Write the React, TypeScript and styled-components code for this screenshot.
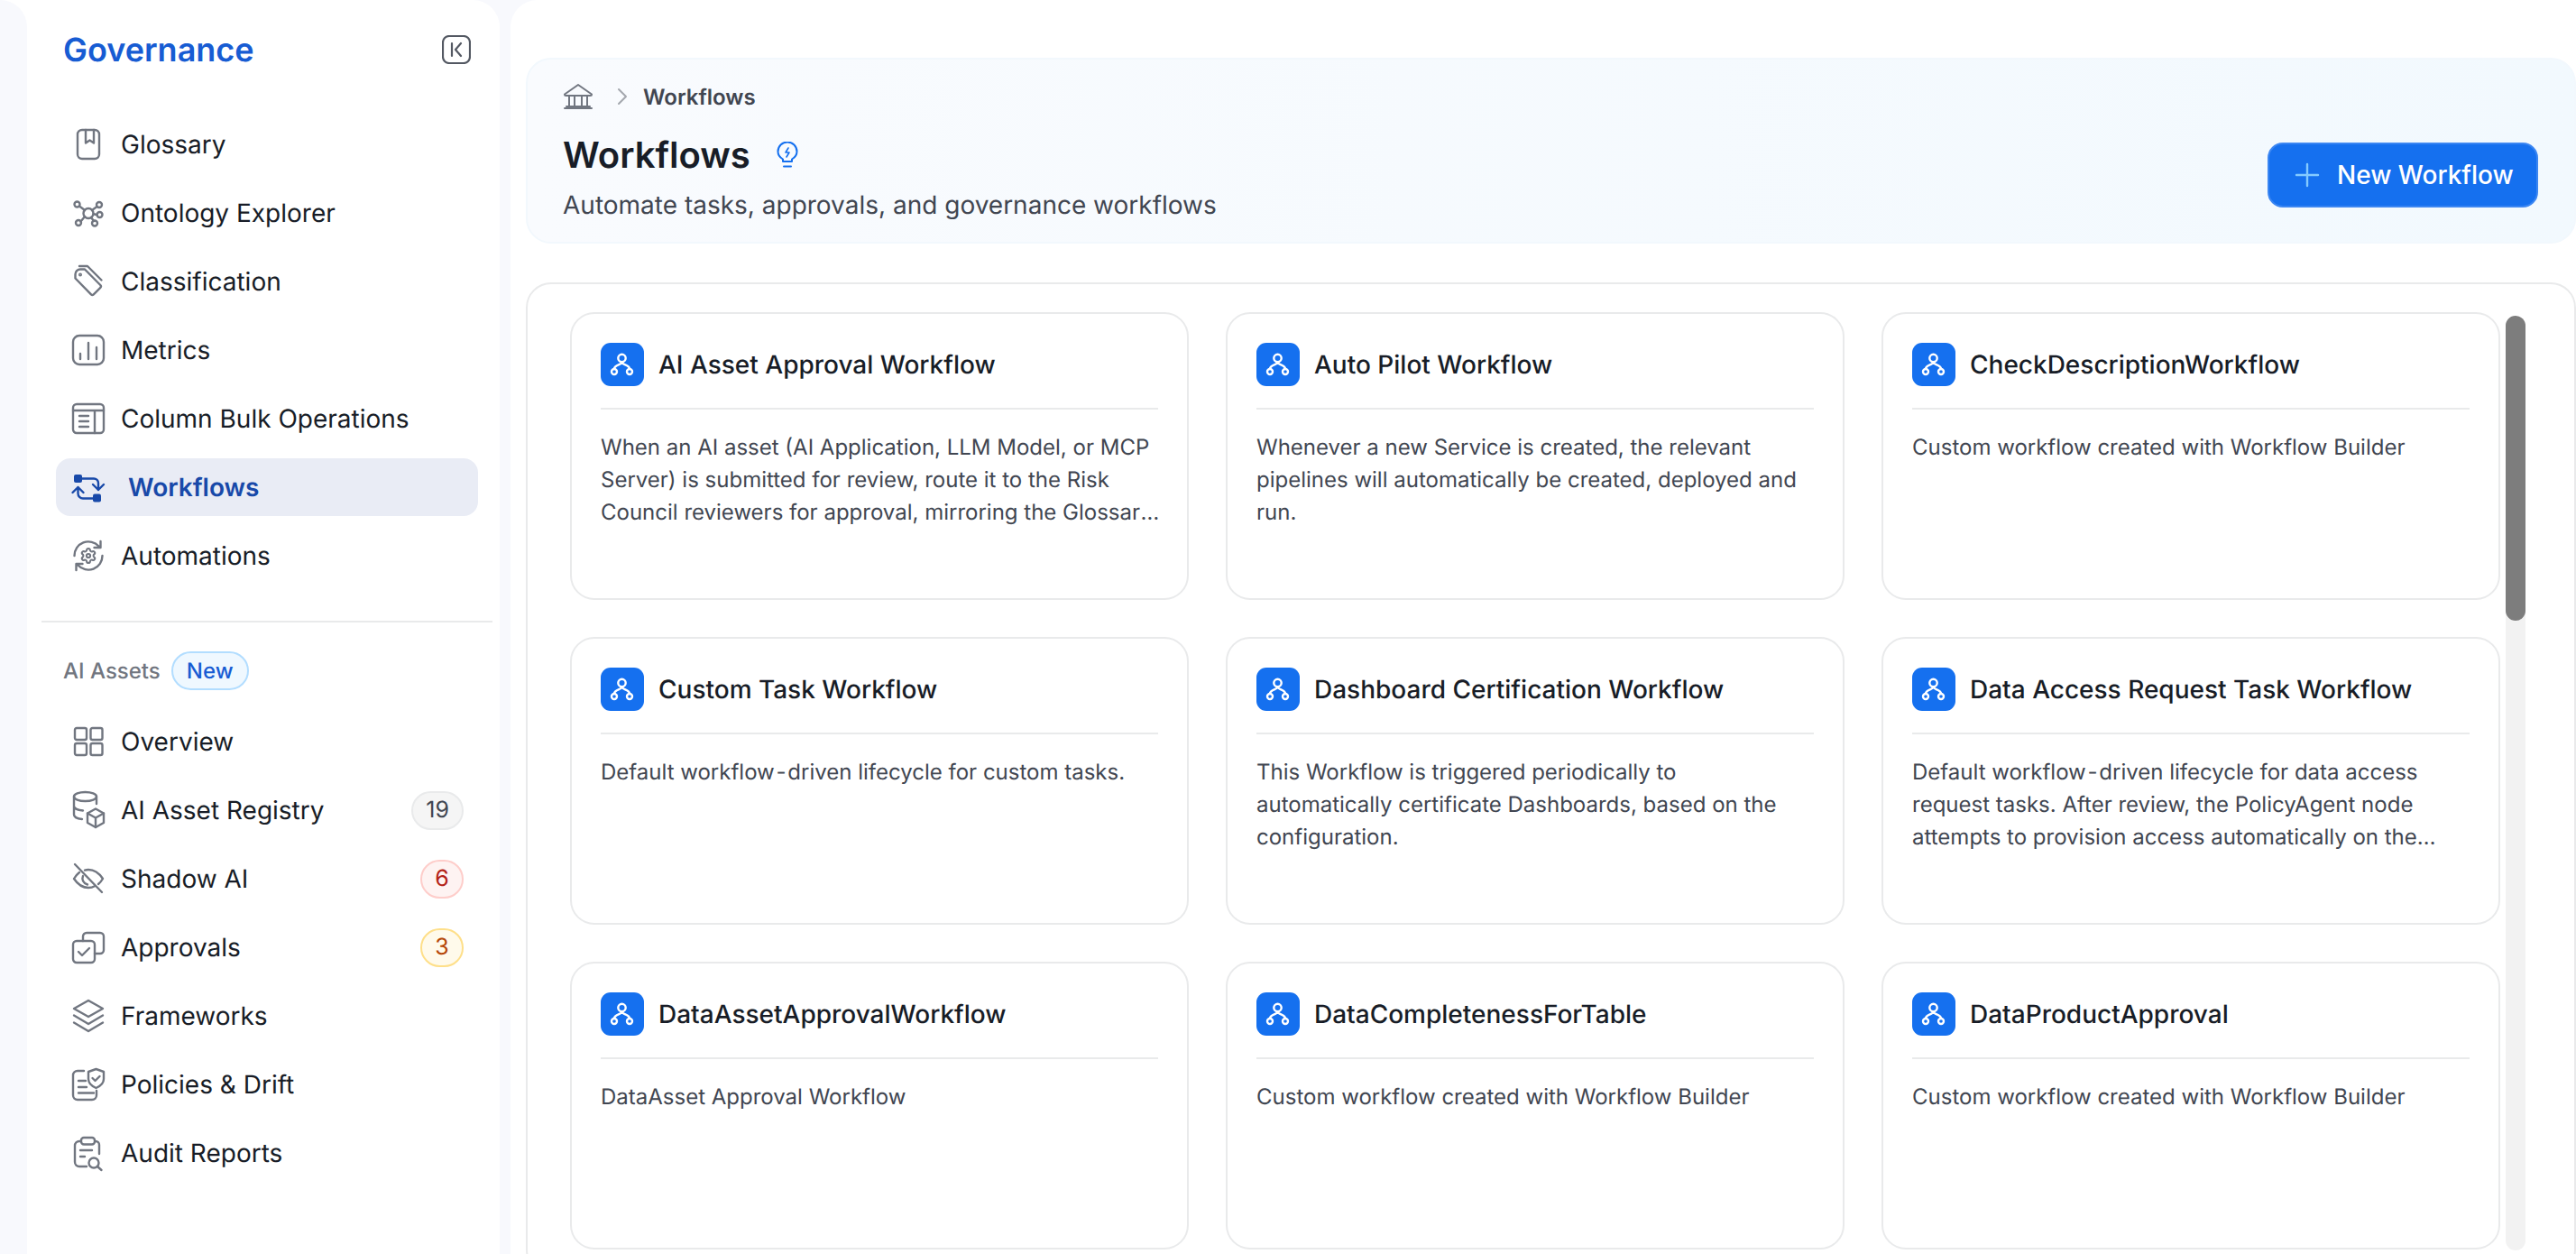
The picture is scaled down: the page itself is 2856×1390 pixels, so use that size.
import { ReactNode } from 'react'
import styled, { createGlobalStyle } from 'styled-components'

//#region STYLE
const GlobalStyle = createGlobalStyle`
	html, body, #root {
		margin: 0;
		height: 100%;
	}
	body {
		background-color: #fff;
		font-family: Inter, "Noto Sans", sans-serif;
		color: #181d27;
		-webkit-font-smoothing: antialiased;
		text-rendering: geometricPrecision;
	}
	* {
		box-sizing: border-box;
	}
`
const Shell = styled.div`
	display: flex;
	height: 100vh;
	overflow: hidden;
	background-color: #fff;
`
const LeftRail = styled.div`
	flex: none;
	width: 30px;
	background-color: #f8f9fd;
	border-top-right-radius: 30px;
`
const Workspace = styled.div`
	flex: 1;
	display: flex;
	gap: 12px;
	min-width: 0;
	background-color: #f8f9fd;
`
const Sidebar = styled.aside`
	flex: none;
	width: 524px;
	padding-top: 33px;
	background-color: #fff;
	border-top-right-radius: 30px;
`
const SidebarHeader = styled.div`
	display: flex;
	align-items: center;
	justify-content: space-between;
	height: 44px;
	padding: 0 32px 0 40px;
	margin-bottom: 51px;
`
const Brand = styled.div`
	font-size: 36px;
	font-weight: 600;
	color: #175cd3;
`
const CollapseButton = styled.div`
	display: flex;
	width: 32px;
	height: 32px;
`
const NavList = styled.nav`
	display: flex;
	flex-direction: column;
	gap: 12px;
	padding: 0 24px 0 32px;
`
const NavItem = styled.div<{ $active?: boolean }>`
	display: flex;
	align-items: center;
	gap: ${p => (p.$active ? 26 : 18)}px;
	height: 64px;
	padding: 0 16px 0 18px;
	border-radius: 16px;
	font-size: 28px;
	font-weight: ${p => (p.$active ? 600 : 400)};
	color: ${p => (p.$active ? '#1849a9' : '#181d27')};
	background-color: ${p => (p.$active ? '#e9ecf5' : 'transparent')};
`
const NavIconBox = styled.svg<{ $active?: boolean }>`
	flex: none;
	width: 36px;
	height: 36px;
	overflow: visible;
	fill: none;
	stroke: ${p => (p.$active ? '#1849a9' : '#717680')};
	stroke-width: 2.4;
	stroke-linecap: round;
	stroke-linejoin: round;
`
const NavLabel = styled.span`
	flex: 1;
	white-space: nowrap;
`
const Divider = styled.div`
	height: 2px;
	margin: 40px 8px 32px 16px;
	background-color: #e9eaeb;
`
const SectionLabel = styled.div`
	display: flex;
	align-items: center;
	gap: 12px;
	height: 43px;
	padding-left: 40px;
	margin-bottom: 25px;
	font-size: 24px;
	font-weight: 500;
	color: #717680;
`
const NewBadge = styled.span`
	display: flex;
	align-items: center;
	justify-content: center;
	width: 86px;
	height: 43px;
	border: 2px solid #b2ddff;
	border-radius: 22px;
	background-color: #eff8ff;
	color: #175cd3;
	font-weight: 500;
`
const tones = {
	gray: { bg: '#f5f5f5', border: '#e9eaeb', color: '#414651' },
	red: { bg: '#fef3f2', border: '#fecdca', color: '#b42318' },
	amber: { bg: '#fffaeb', border: '#fedf89', color: '#b54708' },
}
const CountBadge = styled.span<{ $tone: keyof typeof tones }>`
	display: flex;
	align-items: center;
	justify-content: center;
	min-width: 48px;
	height: 43px;
	padding: 0 14px;
	border: 2px solid ${p => tones[p.$tone].border};
	border-radius: 22px;
	background-color: ${p => tones[p.$tone].bg};
	color: ${p => tones[p.$tone].color};
	font-size: 25px;
`
const Main = styled.main`
	flex: 1;
	min-width: 0;
	padding: 64px 0 0 17px;
	background-color: #fff;
	border-top-left-radius: 30px;
`
const PageHeader = styled.header`
	display: flex;
	align-items: flex-end;
	justify-content: space-between;
	height: 206px;
	padding: 26px 40px 38px 39px;
	border: 2px solid #f2f8fd;
	border-radius: 28px;
	background: linear-gradient(90deg, #f9fbfe 0%, #f2f9fe 100%);
`
const HeaderText = styled.div`
	align-self: flex-start;
`
const Breadcrumb = styled.div`
	display: flex;
	align-items: center;
	height: 30px;
	font-size: 24px;
	font-weight: 600;
	color: #414651;
`
const Crumb = styled.span`
	margin-left: 17px;
`
const BreadcrumbChevron = styled.svg`
	margin-left: 26px;
	fill: none;
	stroke: #a4a7ae;
	stroke-width: 2;
	stroke-linecap: round;
	stroke-linejoin: round;
`
const PageTitleRow = styled.div`
	display: flex;
	align-items: center;
	gap: 29px;
	height: 52px;
	margin-top: 23px;
`
const PageTitle = styled.h1`
	margin: 0;
	font-size: 40px;
	font-weight: 600;
	color: #181d27;
`
const BulbBox = styled.svg`
	margin-top: 2px;
	fill: none;
	stroke: #1570ef;
	stroke-width: 2;
	stroke-linecap: round;
	stroke-linejoin: round;
`
const Subtitle = styled.p`
	margin: 12px 0 0;
	font-size: 28px;
	line-height: 36px;
	color: #414651;
`
const PrimaryButton = styled.button`
	display: flex;
	align-items: center;
	gap: 19px;
	width: 300px;
	height: 72px;
	padding: 0 0 0 28px;
	border: 2px solid #3b86f2;
	border-radius: 17px;
	background-color: #1570ef;
	color: #fff;
	font-family: inherit;
	font-size: 28px;
	font-weight: 500;
`
const ListPanel = styled.section`
	display: flex;
	gap: 6px;
	height: 1100px;
	margin-top: 43px;
	padding: 31px 0 0 47px;
	border: 2px solid #e9eaeb;
	border-radius: 28px;
`
const CardGrid = styled.div`
	display: grid;
	grid-template-columns: repeat(3, 686px);
	grid-auto-rows: 318.5px;
	gap: 41.5px 41px;
`
const Card = styled.article`
	display: flex;
	flex-direction: column;
	padding: 32px 32px 0;
	border: 2px solid #e9eaeb;
	border-radius: 27px;
	background-color: #fff;
`
const CardHead = styled.div`
	display: flex;
	align-items: center;
	gap: 16px;
	padding-bottom: 24px;
	border-bottom: 2px solid #e9eaeb;
`
const CardIcon = styled.div`
	flex: none;
	display: flex;
	align-items: center;
	justify-content: center;
	width: 48px;
	height: 48px;
	border-radius: 11px;
	background-color: #1570ef;
`
const CardTitle = styled.h3`
	margin: 0;
	font-size: 28px;
	font-weight: 500;
	color: #181d27;
	white-space: nowrap;
`
const CardText = styled.p`
	display: -webkit-box;
	margin: 24px -2px 0 0;
	font-size: 24px;
	line-height: 36px;
	color: #414651;
	overflow: hidden;
	-webkit-box-orient: vertical;
	-webkit-line-clamp: 3;
`
const Hyphen = styled.span`
	padding: 0 3px;
`
const ScrollTrack = styled.div`
	flex: none;
	width: 22px;
	height: 1036px;
	margin-top: 4px;
	border-radius: 11px;
	background-color: #f2f2f2;
`
const ScrollThumb = styled.div`
	height: 338px;
	border-radius: 11px;
	background-color: #7d7d7d;
`
//#endregion

//#region ICONS
const Icon = ({ children, active }: { children: ReactNode; active?: boolean }) => (
	<NavIconBox viewBox='0 0 36 36' $active={active}>{children}</NavIconBox>
)

const GlossaryIcon = () => (
	<Icon>
		<rect x='6' y='2' width='24' height='32' rx='5' />
		<path d='M15 2v14.500l4.500-3 4.500 3V2' />
	</Icon>
)
const OntologyIcon = () => (
	<Icon>
		<circle cx='18' cy='18.500' r='5.500' />
		<circle cx='5.500' cy='8.500' r='3' />
		<circle cx='30' cy='9' r='3' />
		<circle cx='30.500' cy='20' r='3' />
		<circle cx='7' cy='29' r='3' />
		<circle cx='25' cy='29.500' r='3' />
		<path d='M8 10.500l6 4.500M27.500 11l-5.500 4M27.500 20l-4-.8M9.500 27.500l4.500-5.500M24 27l-3-4' />
	</Icon>
)
const TagIcon = () => (
	<Icon>
		<path d='M3.500 10v4.500l17.500 17.800a2 2 0 0 0 2.800 0l7.500-7.500a2 2 0 0 0 0-2.800L14 4.500H9a5.500 5.500 0 0 0-5.500 5.500z' />
		<path d='M8 1h9l15.500 15.500' />
		<circle cx='9' cy='10.500' r='.8' />
	</Icon>
)
const MetricsIcon = () => (
	<Icon>
		<rect x='1' y='2' width='34' height='32' rx='7' />
		<path d='M9 22v6M18 10v18M27 15v13' />
	</Icon>
)
const ColumnsIcon = () => (
	<Icon>
		<rect x='1' y='2' width='34' height='32' rx='4' />
		<path d='M1 9h34M25 9v25M8 15h10M8 21h10M8 27h10' />
	</Icon>
)
const WorkflowsIcon = () => (
	<Icon active>
		<rect x='2' y='4' width='9' height='9' rx='2' fill='#1849a9' stroke='none' />
		<rect x='23' y='25.500' width='9' height='9' rx='2' fill='#1849a9' stroke='none' />
		<path d='M11 8.500h13a5 5 0 0 1 5 5v7.500M23 15l6 6 6-6' />
		<path d='M23 30.500H12a5.500 5.500 0 0 1-5.500-5.500v-7M.5 24l6-6 6 6' />
	</Icon>
)
const AutomationsIcon = () => (
	<Icon>
		<path d='M2.500 18a15.500 15.500 0 0 1 27-10.500M31.500 2v7h-7' />
		<path d='M33.500 18a15.500 15.500 0 0 1-27 10.500M4.500 34v-7h7' />
		<g transform='translate(8.400 8.400) scale(.8)' strokeWidth='2.600'>
			<path d='M9.671 4.136a2.34 2.34 0 0 1 4.659 0 2.34 2.34 0 0 0 3.319 1.915 2.34 2.34 0 0 1 2.33 4.033 2.34 2.34 0 0 0 0 3.831 2.34 2.34 0 0 1-2.33 4.033 2.34 2.34 0 0 0-3.319 1.915 2.34 2.34 0 0 1-4.659 0 2.34 2.34 0 0 0-3.32-1.915 2.34 2.34 0 0 1-2.33-4.033 2.34 2.34 0 0 0 0-3.831A2.34 2.34 0 0 1 6.35 6.051a2.34 2.34 0 0 0 3.32-1.915' />
			<circle cx='12' cy='12' r='2.600' />
		</g>
	</Icon>
)
const OverviewIcon = () => (
	<Icon>
		<rect x='3' y='3' width='13' height='13' rx='2' />
		<rect x='20.500' y='3' width='13' height='13' rx='2' />
		<rect x='3' y='20' width='13' height='13' rx='2' />
		<rect x='20.500' y='20' width='13' height='13' rx='2' />
	</Icon>
)
const RegistryIcon = () => (
	<Icon>
		<ellipse cx='14.500' cy='3' rx='12.500' ry='5' />
		<path d='M2 3v20c0 2.500 4 4.500 9 5M2 13.500c0 2.500 4.500 4.500 10 5M27 3v8' />
		<path d='M26 16.500l9 5v10.500l-9 5-9-5V21.500z' />
		<path d='M17 21.500l9 5 9-5M26 26.500V37' />
	</Icon>
)
const ShadowIcon = () => (
	<Icon>
		<path d='M8 11c-2.500 2-4.500 4.500-6 7 4 6 10 10 16 10 2.500 0 5-.6 7-1.700' />
		<path d='M14 8.600c1.300-.4 2.600-.6 4-.6 6 0 12 4 16 10-1.400 2.300-3 4.300-5 6' />
		<path d='M12 15c-1.500 3.500 0 8 5 9.500' />
		<path d='M3 2l30 31' />
	</Icon>
)
const ApprovalsIcon = () => (
	<Icon>
		<rect x='1' y='11' width='24' height='24' rx='4' />
		<path d='M12 11V6a4 4 0 0 1 4-4h15a4 4 0 0 1 4 4v15a4 4 0 0 1-4 4h-6' />
		<path d='M7 23l4 4 8-8' />
	</Icon>
)
const FrameworksIcon = () => (
	<Icon>
		<path d='M18 1l16 9-16 9-16-9z' />
		<path d='M2 17.500l16 9.500 16-9.500M2 25.500l16 9.500 16-9.500' />
	</Icon>
)
const PoliciesIcon = () => (
	<Icon>
		<path d='M13 3H6a5 5 0 0 0-5 5v22a5 5 0 0 0 5 5h16a5 5 0 0 0 5-5v-5' />
		<path d='M7 14h8M7 21h9M7 27.500h17' />
		<path d='M26.500 1l8.500 3v8c0 5-4 8-8.500 10-4.500-2-8.500-5-8.500-10V4z' />
		<path d='M22.500 11l3 3 5-5' />
	</Icon>
)
const AuditIcon = () => (
	<Icon>
		<path d='M10 5H8a5 5 0 0 0-5 5v18a5 5 0 0 0 5 5h8M25 5h1a4 4 0 0 1 4 4v10' />
		<rect x='10' y='1' width='15' height='7.500' rx='3' />
		<path d='M9 15h13M9 22h5' />
		<circle cx='24' cy='29' r='5.500' />
		<path d='M28 33l4.500 4' />
	</Icon>
)
const CollapseIcon = () => (
	<svg viewBox='0 0 32 32' width='32' height='32' fill='none' stroke='#535862' strokeWidth='2.200' strokeLinecap='round' strokeLinejoin='round'>
		<rect x='1' y='1' width='30' height='30' rx='7' />
		<path d='M11 9v14M21 9l-6 7 6 7' />
	</svg>
)
const BankIcon = () => (
	<svg viewBox='0 0 34 30' width='34' height='30' fill='none' stroke='#717680' strokeWidth='2' strokeLinecap='round' strokeLinejoin='round'>
		<path d='M2 12.500L17 2l15 10.500c0 1-.8 1.500-1.500 1.500h-27C2.800 14 2 13.500 2 12.500z' />
		<path d='M7 14v12M13 14v12M21 14v12M27 14v12M2 28h30M4 26h26' />
	</svg>
)
const ChevronIcon = () => (
	<BreadcrumbChevron viewBox='0 0 12 20' width='12' height='20'>
		<path d='M2 2l8 8-8 8' />
	</BreadcrumbChevron>
)
const BulbIcon = () => (
	<BulbBox viewBox='0 0 24 30' width='24' height='30'>
		<path d='M7 22v-2.500C3.500 17.500 1.500 14.500 1.500 11a10.500 10.500 0 0 1 21 0c0 3.500-2 6.500-5.500 8.500V22z' />
		<path d='M8 27.500h8' />
		<path d='M13 7l-3 5h4l-3 5' strokeWidth='1.600' />
	</BulbBox>
)
const PlusIcon = () => (
	<svg viewBox='0 0 28 28' width='28' height='28' fill='none' stroke='#84caff' strokeWidth='2.400' strokeLinecap='round'>
		<path d='M14 2v24M2 14h24' />
	</svg>
)
const NodeIcon = () => (
	<svg viewBox='0 0 28 28' width='28' height='28' fill='none' stroke='#fff' strokeWidth='2.400' strokeLinecap='round' strokeLinejoin='round'>
		<circle cx='13.500' cy='7' r='4.200' />
		<circle cx='5' cy='22' r='3' />
		<circle cx='22' cy='22' r='3' />
		<path d='M13.500 11.200c0 3.500-8.500 3-8.500 7.800M13.500 11.200c0 3.500 8.500 3 8.500 7.800' />
	</svg>
)
//#endregion

type NavEntry = {
	label: string
	icon: ReactNode
	active?: boolean
	count?: string
	tone?: keyof typeof tones
}

const governanceItems: NavEntry[] = [
	{ label: 'Glossary', icon: <GlossaryIcon /> },
	{ label: 'Ontology Explorer', icon: <OntologyIcon /> },
	{ label: 'Classification', icon: <TagIcon /> },
	{ label: 'Metrics', icon: <MetricsIcon /> },
	{ label: 'Column Bulk Operations', icon: <ColumnsIcon /> },
	{ label: 'Workflows', icon: <WorkflowsIcon />, active: true },
	{ label: 'Automations', icon: <AutomationsIcon /> },
]

const aiItems: NavEntry[] = [
	{ label: 'Overview', icon: <OverviewIcon /> },
	{ label: 'AI Asset Registry', icon: <RegistryIcon />, count: '19', tone: 'gray' },
	{ label: 'Shadow AI', icon: <ShadowIcon />, count: '6', tone: 'red' },
	{ label: 'Approvals', icon: <ApprovalsIcon />, count: '3', tone: 'amber' },
	{ label: 'Frameworks', icon: <FrameworksIcon /> },
	{ label: 'Policies & Drift', icon: <PoliciesIcon /> },
	{ label: 'Audit Reports', icon: <AuditIcon /> },
]

const workflows: { title: string; text: ReactNode }[] = [
	{ title: 'AI Asset Approval Workflow', text: 'When an AI asset (AI Application, LLM Model, or MCP Server) is submitted for review, route it to the Risk Council reviewers for approval, mirroring the Glossary Term Approval Workflow.' },
	{ title: 'Auto Pilot Workflow', text: 'Whenever a new Service is created, the relevant pipelines will automatically be created, deployed and run.' },
	{ title: 'CheckDescriptionWorkflow', text: 'Custom workflow created with Workflow Builder' },
	{ title: 'Custom Task Workflow', text: <>Default workflow<Hyphen>{'\u2011'}</Hyphen>driven lifecycle for custom tasks.</> },
	{ title: 'Dashboard Certification Workflow', text: 'This Workflow is triggered periodically to automatically certificate Dashboards, based on the configuration.' },
	{ title: 'Data Access Request Task Workflow', text: <>Default workflow<Hyphen>{'\u2011'}</Hyphen>driven lifecycle for data access request tasks. After review, the PolicyAgent node attempts to provision access automatically on the target service when approved.</> },
	{ title: 'DataAssetApprovalWorkflow', text: 'DataAsset Approval Workflow' },
	{ title: 'DataCompletenessForTable', text: 'Custom workflow created with Workflow Builder' },
	{ title: 'DataProductApproval', text: 'Custom workflow created with Workflow Builder' },
]

const renderNav = (items: NavEntry[]) => items.map(item => (
	<NavItem key={item.label} $active={item.active}>
		{item.icon}
		<NavLabel>{item.label}</NavLabel>
		{item.count && <CountBadge $tone={item.tone || 'gray'}>{item.count}</CountBadge>}
	</NavItem>
))

const App = () => {
	//#region RENDER
	return (
		<Shell>
			<GlobalStyle />
			<LeftRail />
			<Workspace>
				<Sidebar>
					<SidebarHeader>
						<Brand>Governance</Brand>
						<CollapseButton><CollapseIcon /></CollapseButton>
					</SidebarHeader>
					<NavList>{renderNav(governanceItems)}</NavList>
					<Divider />
					<SectionLabel>
						AI Assets
						<NewBadge>New</NewBadge>
					</SectionLabel>
					<NavList>{renderNav(aiItems)}</NavList>
				</Sidebar>
				<Main>
					<PageHeader>
						<HeaderText>
							<Breadcrumb>
								<BankIcon />
								<ChevronIcon />
								<Crumb>Workflows</Crumb>
							</Breadcrumb>
							<PageTitleRow>
								<PageTitle>Workflows</PageTitle>
								<BulbIcon />
							</PageTitleRow>
							<Subtitle>Automate tasks, approvals, and governance workflows</Subtitle>
						</HeaderText>
						<PrimaryButton>
							<PlusIcon />
							New Workflow
						</PrimaryButton>
					</PageHeader>
					<ListPanel>
						<CardGrid>
							{workflows.map(flow => (
								<Card key={flow.title}>
									<CardHead>
										<CardIcon><NodeIcon /></CardIcon>
										<CardTitle>{flow.title}</CardTitle>
									</CardHead>
									<CardText>{flow.text}</CardText>
								</Card>
							))}
						</CardGrid>
						<ScrollTrack><ScrollThumb /></ScrollTrack>
					</ListPanel>
				</Main>
			</Workspace>
		</Shell>
	)
	//#endregion
}

export default App
